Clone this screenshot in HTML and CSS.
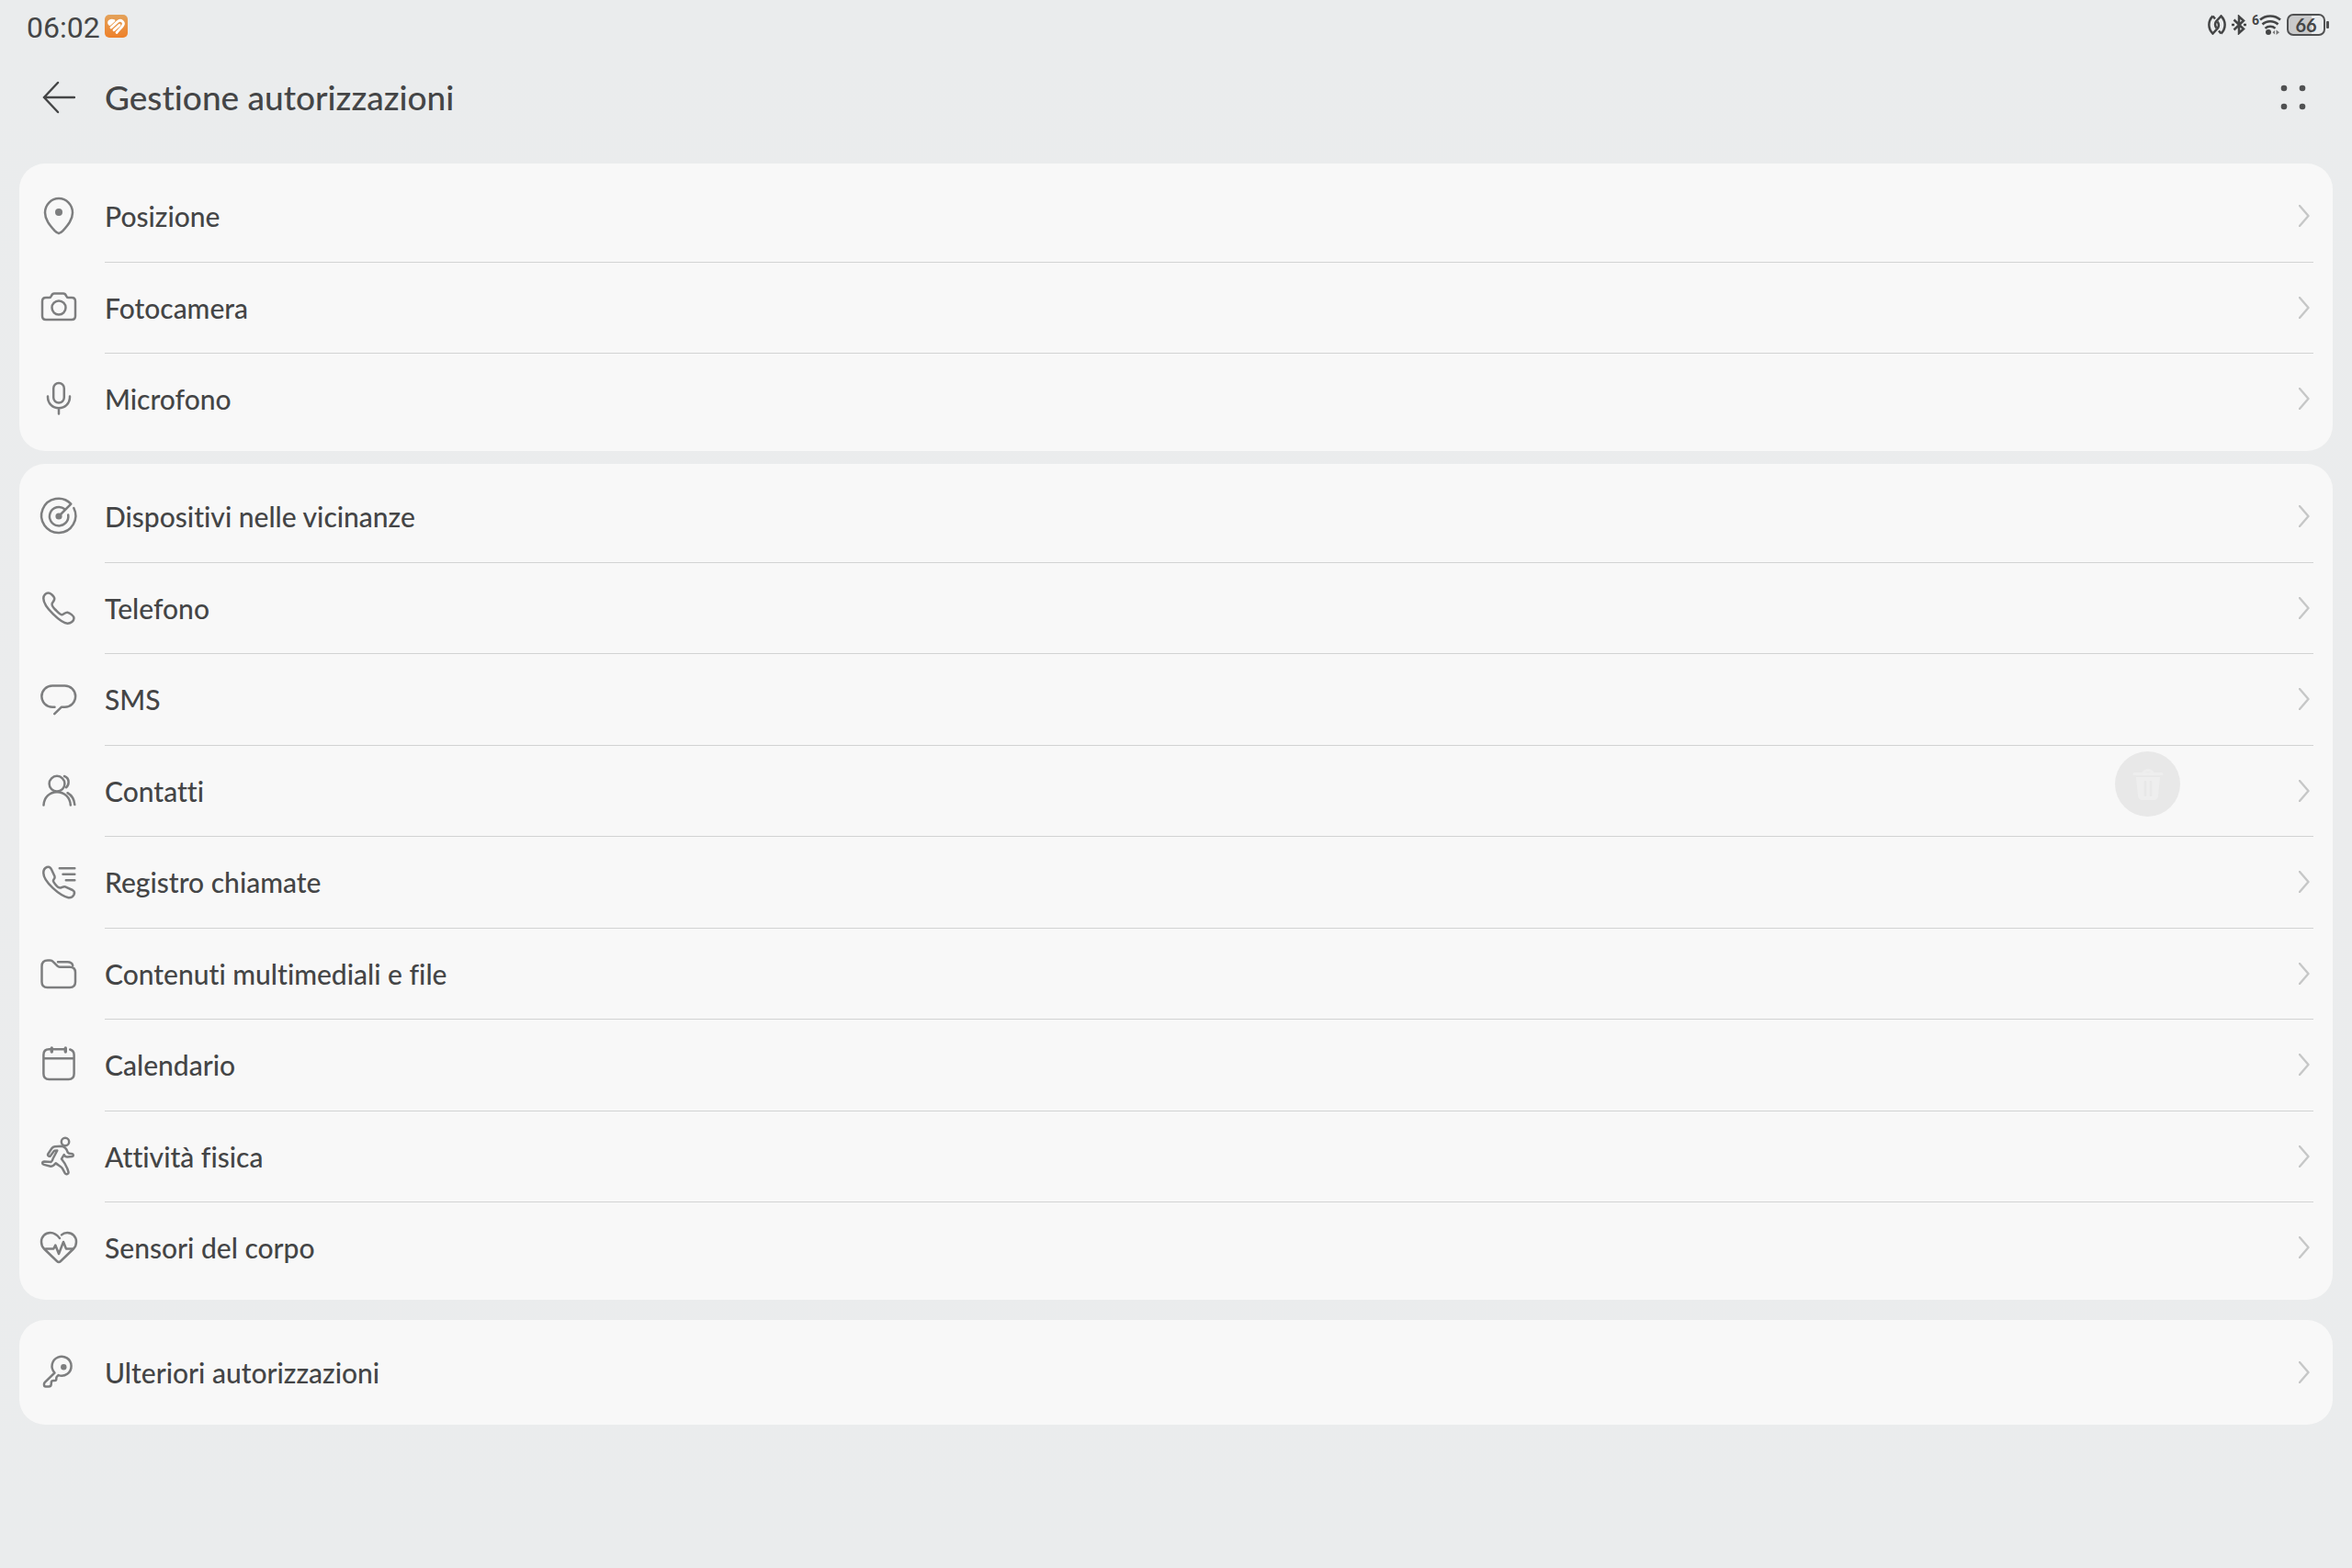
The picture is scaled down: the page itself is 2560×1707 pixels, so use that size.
FILE: index.html
```
<!DOCTYPE html>
<html lang="it">
<head>
    <meta charset="UTF-8">
    <meta name="viewport" content="width=device-width, initial-scale=1.0">
    <title>Gestione autorizzazioni</title>
    <link rel="stylesheet" href="styles.css">
</head>
<body>
    <div class="status-bar">
        <div class="status-left">
            <time>06:02</time>
            <svg class="health" width="25" height="25" viewBox="0 0 25 25">
                <defs>
                    <linearGradient id="orange" x1="0" y1="0" x2="0" y2="1">
                        <stop offset="0" stop-color="#e3a25a" />
                        <stop offset="1" stop-color="#ee8029" />
                    </linearGradient>
                </defs>
                <rect width="25" height="25" rx="5" fill="url(#orange)" />
                <g fill="none" stroke="#fff" stroke-width="2.800" stroke-linecap="round" stroke-linejoin="round">
                    <path d="M4.700 9.500C4 7 6.500 5.500 10 6.500L5.500 10.500" />
                    <path d="M7 14l7-6.500c3.500-3 8 .5 5.700 4.300-1 1.700-4.500 5-6.700 7.700" />
                    <path d="M10 16.800l6-5.600" />
                </g>
            </svg>
        </div>
        <div class="status-right">
            <svg class="nfc" width="20" height="22" viewBox="0 0 20 22">
                <path d="M5.500 1.500C0 7 0 15 5.500 20.500L11 14.500c1.500-2.500 1-5-.5-7" />
                <path d="M14.500 20.500C20 15 20 7 14.500 1.500L9 7.500c-1.500 2.500-1 5 .5 7" />
                <path d="M5.500 1.500l2.500 3M14.500 20.500l-2.500-3" />
            </svg>
            <svg class="bt" width="16" height="22" viewBox="0 0 16 22">
                <path d="M2.500 5.500l10.500 10-5 4.500V2l5 4.500-10.500 10" />
                <path d="M0 11h3M13 11h3" />
            </svg>
            <div class="wifi">
                <span>6</span>
                <svg width="24" height="24" viewBox="0 0 24 24">
                    <path d="M1 6.500c6-5.500 16-5.500 22 0M3.500 11.500c4.500-4.500 12.500-4.500 17 0M6.500 15.800c3-2.800 8-2.800 11 0" />
                    <circle cx="10" cy="20" r="3" />
                    <path class="tri" d="M18.500 17.500v5.500l3.500-2.700zM17 18v4.500l-2.500-2.200z" />
                </svg>
            </div>
            <div class="battery"><span>66</span></div>
        </div>
    </div>

    <header class="title-bar">
        <button type="button" class="icon-button" aria-label="Indietro">
            <svg width="36" height="36" viewBox="0 0 36 36">
                <path d="M17 2L2 18l15 16M2 18h33" />
            </svg>
        </button>
        <h1>Gestione autorizzazioni</h1>
        <button type="button" class="icon-button more" aria-label="Altro">
            <svg width="28" height="28" viewBox="0 0 28 28">
                <circle cx="4" cy="4" r="3.300" />
                <circle cx="24" cy="4" r="3.300" />
                <circle cx="4" cy="24" r="3.300" />
                <circle cx="24" cy="24" r="3.300" />
            </svg>
        </button>
    </header>

    <main>
        <ul class="card">
            <li><a href="#posizione">
                <svg class="icon" viewBox="0 0 48 48">
                    <path d="M24 43c-2 0-3-1.200-4.500-2.800C14 34 9 28 9 20.500a15 15.500 0 0 1 30 0c0 7.500-5 13.500-10.500 19.700C27 41.800 26 43 24 43z" />
                    <circle class="dot" cx="24" cy="20" r="4" />
                </svg>
                <span>Posizione</span>
                <svg class="chevron" viewBox="0 0 12 24"><path d="M1 1l9.500 11L1 23" /></svg>
            </a></li>
            <li><a href="#fotocamera">
                <svg class="icon" viewBox="0 0 48 48">
                    <path d="M10 13h3.500c1.500 0 2-.8 2.500-2 .7-1.700 1.500-2.500 3-2.500h10c1.500 0 2.300.8 3 2.500.5 1.200 1 2 2.500 2H38q4 0 4 4v16q0 4-4 4H10q-4 0-4-4V17q0-4 4-4z" />
                    <circle cx="24" cy="24" r="7.500" />
                </svg>
                <span>Fotocamera</span>
                <svg class="chevron" viewBox="0 0 12 24"><path d="M1 1l9.500 11L1 23" /></svg>
            </a></li>
            <li><a href="#microfono">
                <svg class="icon" viewBox="0 0 48 48">
                    <rect x="18.200" y="7" width="11.600" height="21.500" rx="5.800" />
                    <path d="M12 21.500v.8c0 7 5.300 12 12 12s12-5 12-12v-.8M24 34.500V40.500" />
                </svg>
                <span>Microfono</span>
                <svg class="chevron" viewBox="0 0 12 24"><path d="M1 1l9.500 11L1 23" /></svg>
            </a></li>
        </ul>

        <ul class="card">
            <li><a href="#dispositivi">
                <svg class="icon" viewBox="0 0 48 48">
                    <path d="M24 24L37.300 10.700A18.600 18.600 0 1 0 40.300 15" />
                    <path d="M30.500 16.200A10.200 10.200 0 1 0 34.200 22.500" />
                    <circle class="dot" cx="24" cy="24" r="3.600" />
                </svg>
                <span>Dispositivi nelle vicinanze</span>
                <svg class="chevron" viewBox="0 0 12 24"><path d="M1 1l9.500 11L1 23" /></svg>
            </a></li>
            <li><a href="#telefono">
                <svg class="icon" viewBox="0 0 48 48">
                    <path d="M12.500 7.500c2.500 0 5.500 3 6.500 5 1.300 2.500-1.700 5-2.300 6.500-.7 2 .3 3.500 3.300 6.500s5.500 6 7.500 5.800c2-.3 3.500-3 6-2.500s7 3.700 7 6.200c0 3-3.500 5.700-7 5.700C27 40.700 7.300 23 7.300 13.500c0-3.500 2.700-6 5.200-6z" />
                </svg>
                <span>Telefono</span>
                <svg class="chevron" viewBox="0 0 12 24"><path d="M1 1l9.500 11L1 23" /></svg>
            </a></li>
            <li><a href="#sms">
                <svg class="icon" viewBox="0 0 48 48">
                    <path d="M19.500 32.700H17A11.650 11.650 0 0 1 17 9.400H30.500A11.650 11.650 0 0 1 30.500 32.700H27L19.300 40.200" />
                </svg>
                <span>SMS</span>
                <svg class="chevron" viewBox="0 0 12 24"><path d="M1 1l9.500 11L1 23" /></svg>
            </a></li>
            <li><a href="#contatti">
                <svg class="icon" viewBox="0 0 48 48">
                    <circle cx="22" cy="16.200" r="8.400" />
                    <path d="M7.500 39.500C8 31 14 25.200 22 25.200S36.300 31 36.800 39.500" />
                    <path d="M30 8c3 1 4.600 3.600 4.600 6.500 0 2.500-1 4.500-2.600 5.800M33.500 26.200c4.500 2.600 7.300 7 7.800 12.800" />
                </svg>
                <span>Contatti</span>
                <svg class="chevron" viewBox="0 0 12 24"><path d="M1 1l9.500 11L1 23" /></svg>
            </a></li>
            <li><a href="#registro">
                <svg class="icon" viewBox="0 0 48 48">
                    <path d="M11 8c2.500-1 4 .3 5 2.500l3.500 7.500c.5 1.300 0 2-1 3.500s-.8 2 1.500 5 4.500 4.300 6 4c1.500-.2 3-2 5-1.200l8 3.700c2 1 2.600 2.500 1.500 5-1.200 2.300-3.500 3.500-6 3.200C25 39 7.500 24 7.300 14.500 7.200 11.500 8.500 9 11 8z" />
                    <path d="M24.800 9.300h16.500M28.500 15.700h12.800M31.800 22.300h9.500" />
                </svg>
                <span>Registro chiamate</span>
                <svg class="chevron" viewBox="0 0 12 24"><path d="M1 1l9.500 11L1 23" /></svg>
            </a></li>
            <li><a href="#file">
                <svg class="icon" viewBox="0 0 48 48">
                    <path d="M5.500 16q0-6.500 6.500-6.500h2.500c1.700 0 2.500.5 3.700 1.800l4.300 4.400c.8.800 1.500 1.100 2.500 1.100h11q6 0 6 6V33q0 6-6 6H11.500q-6 0-6-6z" />
                    <path d="M23 11.300h10.500c3.500 0 5 1.200 5.700 3.700" />
                </svg>
                <span>Contenuti multimediali e file</span>
                <svg class="chevron" viewBox="0 0 12 24"><path d="M1 1l9.500 11L1 23" /></svg>
            </a></li>
            <li><a href="#calendario">
                <svg class="icon" viewBox="0 0 48 48">
                    <path d="M16.300 7.300H13.400q-6 0-6 6V34q0 6 6 6h21.200q6 0 6-6V13.300q0-4.500-4.400-5.800M16.300 7.300h15M8 17.200h32" />
                    <path class="bold" d="M16.300 6v4M31.300 6v4" />
                </svg>
                <span>Calendario</span>
                <svg class="chevron" viewBox="0 0 12 24"><path d="M1 1l9.500 11L1 23" /></svg>
            </a></li>
            <li><a href="#attivita">
                <svg class="icon" viewBox="0 0 48 48">
                    <circle cx="31" cy="8" r="4.200" />
                    <path d="M26.500 12.700l-7 .6c-1.500.2-2.300.7-3.200 2l-4 6c-.9 2 1.500 3.300 2.800 1.800l4-5.300 3.200-.3-4.500 8.500c-.5 2-1 3.200-2.300 4l-7.300-.5c-2.500 0-2.700 2.900-.5 3.400l7.300 1.800c2 .2 3.500-.7 5.700-3.500 3 2.500 5.500 3.500 7 5.500l3 5.500c1.200 2 4.200 1 3.800-1.200-1-4-3-9-7.500-14.300l2.700-4.700c1 2 2 2.700 3.700 2.600l5-.5c2-.4 1.800-3-.4-3.100-2.300 0-3.200.2-4.300-1.500-.8-3-2-6.300-7.200-6.800z" />
                </svg>
                <span>Attività fisica</span>
                <svg class="chevron" viewBox="0 0 12 24"><path d="M1 1l9.500 11L1 23" /></svg>
            </a></li>
            <li><a href="#sensori">
                <svg class="icon" viewBox="0 0 48 48">
                    <path d="M25 14C22 10 18.500 8 14.800 8 9 8 5 12.500 5 18c0 3 1 5.500 3 7.500L22 39q2 2 4 0l14-13.500c2-2 3-4.500 3-7.500 0-5.500-4-10-9.800-10-2.500 0-4.500.7-6.200 2.300" />
                    <path d="M10 25.500h8.300l2-4L24 31l5-13 3 7.500h7" />
                </svg>
                <span>Sensori del corpo</span>
                <svg class="chevron" viewBox="0 0 12 24"><path d="M1 1l9.500 11L1 23" /></svg>
            </a></li>
        </ul>

        <ul class="card other">
            <li><a href="#ulteriori">
                <svg class="icon" viewBox="0 0 48 48">
                    <path d="M19.500 24.500a10.500 10.500 0 1 1 4 2.600l-1.500 1.500q-.7.700-.7 1.600v1q0 1.800-1.800 1.800h-1.200q-2.300 0-2.500 2v1.500c0 2-.8 3-2.800 3H9.700q-1.700 0-1.700-1.700v-1.200q0-1 .8-1.800z" />
                    <circle class="dot" cx="29.300" cy="18.300" r="3.200" />
                </svg>
                <span>Ulteriori autorizzazioni</span>
                <svg class="chevron" viewBox="0 0 12 24"><path d="M1 1l9.500 11L1 23" /></svg>
            </a></li>
        </ul>
    </main>

    <button type="button" class="trash" aria-label="Elimina">
        <svg width="34" height="36" viewBox="0 0 34 36">
            <path d="M2 6.500h30M12 5q5-5 10 0" fill="none" stroke="#eeeeee" stroke-width="3" stroke-linecap="round" />
            <path d="M4 10h26l-2 20q-.5 5-5 5H11q-4.500 0-5-5z" fill="#eeeeee" />
            <path d="M14 15v15M20 15v15" stroke="#e8e8e8" stroke-width="2.500" stroke-linecap="round" />
        </svg>
    </button>
</body>
</html>
```
FILE: styles.css
```
* {
    margin: 0;
    padding: 0;
    box-sizing: border-box;
}

body {
    min-height: 100vh;
    background: linear-gradient(#eaeced, #ebeced 50%, #eaeced);
    color: #444546;
    font-family: Lato, 'Noto Sans', sans-serif;
    font-weight: 500;
    font-variant-ligatures: none;
}

.status-bar {
    display: flex;
    justify-content: space-between;
    align-items: center;
    height: 60px;
    padding: 0 24px 0 29px;
}

.status-left,
.status-right {
    display: flex;
    align-items: center;
}

.status-left {
    gap: 5px;
}

.status-left time {
    font-family: Roboto, sans-serif;
    font-size: 32px;
    font-weight: 400;
    line-height: 36px;
}

.status-left .health {
    margin-bottom: 4px;
}

.status-right {
    gap: 6px;
    height: 54px;
    align-self: flex-start;
}

.status-right svg {
    fill: none;
    stroke: #444546;
    stroke-width: 2.5;
}

.wifi {
    display: flex;
    align-items: flex-start;
}

.wifi span {
    width: 8px;
    font-family: Roboto, sans-serif;
    font-size: 14px;
    font-weight: bold;
    line-height: 14px;
}

.wifi circle,
.wifi .tri {
    fill: #444546;
    stroke: none;
}

.wifi .tri {
    opacity: 0.7;
}

.battery {
    position: relative;
    width: 42px;
    height: 24px;
    margin-right: 5px;
    border: 2px solid #505152;
    border-radius: 7px;
    background: linear-gradient(to right, #c9cacb 66%, transparent 66%);
    font-size: 20px;
    font-weight: bold;
    line-height: 20px;
    text-align: center;
}

/* battery tip */
.battery::after {
    content: "";
    position: absolute;
    right: -6px;
    top: 6px;
    width: 3px;
    height: 8px;
    border-radius: 1px;
    background: #505152;
}

.title-bar {
    display: flex;
    align-items: center;
    height: 92px;
    padding: 0 50px 0 46px;
}

.title-bar h1 {
    flex: 1;
    margin-left: 32px;
    font-size: 37px;
    font-weight: 500;
    line-height: 48px;
}

.icon-button {
    border: none;
    background: none;
    line-height: 0;
    cursor: pointer;
}

.icon-button svg {
    fill: none;
    stroke: #444546;
    stroke-width: 2.4;
    stroke-linecap: round;
}

.icon-button.more svg {
    fill: #505152;
    stroke: none;
}

main {
    padding: 26px 21px 0;
}

.card {
    margin-bottom: 14px;
    padding: 7px 21px 7px 19px;
    border-radius: 28px;
    background-color: #f8f8f8;
    list-style: none;
}

.card.other {
    margin-top: 22px;
}

.card a {
    display: flex;
    align-items: center;
    height: 100px;
    color: inherit;
    text-decoration: none;
}

.card li:nth-child(even) a {
    height: 99px;
}

.card span {
    flex: 1;
    font-size: 30px;
    line-height: 40px;
}

.card li {
    position: relative;
}

/* divider starts under the label, not under the icon */
.card li + li::before {
    content: "";
    position: absolute;
    top: 0;
    left: 74px;
    right: 0;
    height: 1px;
    background-color: #d2d3d3;
}

.icon {
    width: 48px;
    height: 48px;
    margin-right: 26px;
    fill: none;
    stroke: #7d7e7f;
    stroke-width: 2.5;
    stroke-linecap: round;
    stroke-linejoin: round;
}

.icon .dot {
    fill: #7d7e7f;
    stroke: none;
}

.icon .bold {
    stroke-width: 3.4;
}

.chevron {
    width: 12px;
    height: 24px;
    margin-right: 4px;
    fill: none;
    stroke: #c6c7c7;
    stroke-width: 2.4;
    stroke-linecap: round;
    stroke-linejoin: round;
}

.trash {
    position: absolute;
    top: 818px;
    right: 187px;
    display: flex;
    align-items: center;
    justify-content: center;
    width: 71px;
    height: 71px;
    border: none;
    border-radius: 50%;
    background-color: #e8e8e8;
}
```
